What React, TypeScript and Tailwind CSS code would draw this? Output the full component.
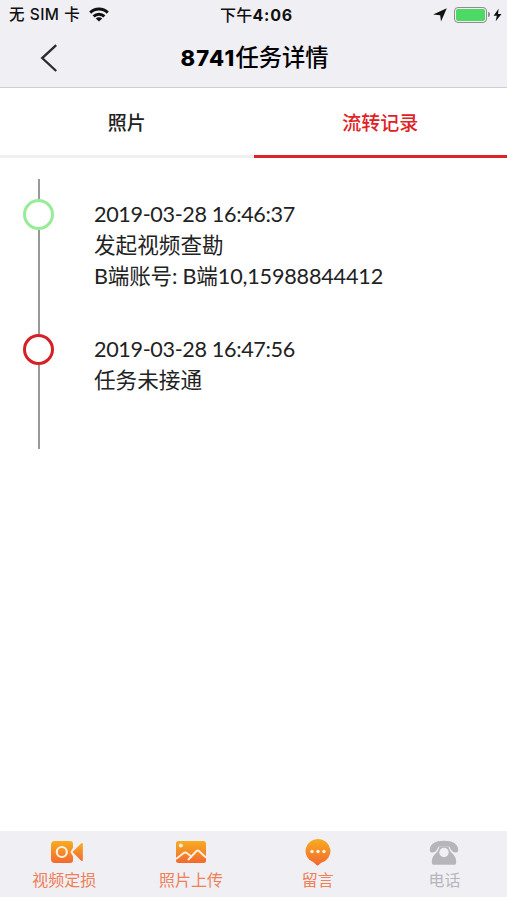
import type { ReactNode } from 'react'
import { clsx } from 'clsx'

type RecordItem = { time: string; lines: string[]; status: 'ok' | 'fail' }

const RECORDS: RecordItem[] = [
  {
    time: '2019-03-28 16:46:37',
    lines: ['发起视频查勘', 'B端账号: B端10,15988844412'],
    status: 'ok',
  },
  { time: '2019-03-28 16:47:56', lines: ['任务未接通'], status: 'fail' },
]

function WifiIcon() {
  return (
    <svg width="20" height="15" viewBox="0 0 20 15" fill="none" stroke="#111" strokeWidth="2.9">
      <path d="M1.2 5.6a12.6 12.6 0 0 1 17.6 0" />
      <path d="M4.6 9.4a7.8 7.8 0 0 1 10.8 0" />
      <path d="M10 14.6 6.800 11.500a4.500 4.500 0 0 1 6.400 0Z" fill="#111" stroke="none" />
    </svg>
  )
}

function StatusBar() {
  return (
    <div className="grid h-[29px] grid-cols-3 items-center text-[16px] text-[#111]">
      <div className="flex items-center pl-[9px] font-medium">
        <span className="whitespace-pre text-[15.5px] tracking-[0.5px]">无 SIM 卡</span>
        <span className="ml-[9px]">
          <WifiIcon />
        </span>
      </div>
      <div className="pl-[6px] text-center font-medium whitespace-nowrap tracking-[0.2px]">
        下午<span className="font-bold tracking-[0.8px]">4:06</span>
      </div>
      <div className="flex items-center justify-end pr-[5px]">
        <svg width="14" height="14" viewBox="0 0 14 14" fill="#111">
          <path d="M13.8.2 8 13.6 7.2 7.2.1 6.4Z" />
        </svg>
        <div className="ml-[7px] h-4 w-[33px] rounded-[4px] border border-[#8d8d92] p-px">
          <div className="h-full rounded-[2px] bg-[#4cd964]" />
        </div>
        <div className="ml-px h-[5px] w-[2px] rounded-r bg-[#8d8d92]" />
        <svg className="ml-[3px]" width="9" height="14" viewBox="0 0 9 14" fill="#111">
          <path d="M5.6.8.6 7.7h3.2L2.7 13.2 8.5 6H5Z" />
        </svg>
      </div>
    </div>
  )
}

function NavBar() {
  return (
    <div className="grid h-[59px] grid-cols-[90px_1fr_90px] items-center border-b border-[#cfcfd3]">
      <button className="pl-[40px]" aria-label="返回">
        <svg width="18" height="28" viewBox="0 0 18 28" fill="none" stroke="#2b2b2d" strokeWidth="2.3">
          <path d="M16.2 1.2 2.2 14.1l14 12.9" />
        </svg>
      </button>
      <h1 className="pl-[2px] text-center text-[23.3px] leading-none font-medium whitespace-nowrap text-black">
        <span className="text-[22px] font-extrabold tracking-[1.2px]">8741</span>任务详情
      </h1>
    </div>
  )
}

function Tab({ label, active }: { label: string; active?: boolean }) {
  return (
    <button
      className={clsx(
        'flex-1 border-b-[3px] pt-[5px] text-[19px] font-medium',
        active ? 'border-[#de2226] text-[#de2226]' : 'border-[#f0f0f2] text-[#222]',
      )}
    >
      {label}
    </button>
  )
}

function TimelineRow({ record }: { record: RecordItem }) {
  return (
    <li className="flex h-[135px]">
      <div className="flex w-[31px] flex-col items-center">
        <div className="h-5 w-[2px] bg-[#999]" />
        <div
          className={clsx(
            'size-[31px] rounded-full border-3',
            record.status === 'ok' ? 'border-[#98eb98]' : 'border-[#d42027]',
          )}
        />
        <div className="w-[2px] flex-1 bg-[#999]" />
      </div>
      <div className="ml-[40px] pt-5 font-[Lato,'Noto_Sans_CJK_SC',sans-serif] text-[21.6px] leading-[31px] whitespace-nowrap text-[#222]">
        <p className="tracking-[-0.36px]">{record.time}</p>
        {record.lines.map((line) => (
          <p key={line} className={clsx(line.includes(':') && 'tracking-[-0.18px]')}>
            {line}
          </p>
        ))}
      </div>
    </li>
  )
}

function VideoIcon() {
  return (
    <svg width="34" height="28" viewBox="0 0 34 28" className="ml-[7px]">
      <path d="M5 3h15q3 0 3 3v3.5L20.5 14l2.5 4.5V22q0 3-3 3H5q-4 0-4-4V7q0-4 4-4Z" fill="url(#orange)" />
      <path d="M22.5 14 31 5.5q1.8-1.5 1.8.8v15.4q0 2.3-1.8.8Z" fill="url(#orange)" />
      <circle cx="11.8" cy="14" r="5" fill="none" stroke="#fdf0dc" strokeWidth="2.2" />
    </svg>
  )
}

function PhotoIcon() {
  return (
    <svg width="32" height="28" viewBox="0 0 32 28" className="ml-[2px]">
      <rect x="1" y="3" width="30" height="22" rx="2.5" fill="url(#orange)" />
      <circle cx="5.8" cy="7.6" r="2" fill="#fdf0dc" />
      <path
        d="m1 21 8-6.2q1.2-.8 2.4 0l5 3.7M13 22l8.5-9q1.2-1 2.4 0l7.1 6.500"
        fill="none"
        stroke="#fdf0dc"
        strokeWidth="2"
      />
    </svg>
  )
}

function MessageIcon() {
  return (
    <svg width="28" height="28" viewBox="0 0 28 28" className="ml-[2px]">
      <path
        d="M14 .9a12.400 12.100 0 0 1 3.200 23.800L14.300 27.200q-.9.700-1.600 0L9.500 24.300A12.400 12.100 0 0 1 14 .9Z"
        fill="url(#orange)"
      />
      <circle cx="8" cy="13.500" r="1.700" fill="#fff5e6" />
      <circle cx="14" cy="13.500" r="1.700" fill="#fff5e6" />
      <circle cx="20" cy="13.500" r="1.700" fill="#fff5e6" />
    </svg>
  )
}

function PhoneIcon() {
  return (
    <svg width="30" height="28" viewBox="0 0 30 28">
      <path
        d="M.8 12C.8 6 6.5 2.8 15 2.8S29.2 6 29.2 12c0 1.8-.8 2.5-2.4 2.5-2 0-3.300-.8-4.600-2.500-1-1.300-1.200-2.200-1.700-3.200H9.500c-.5 1-.7 1.900-1.700 3.200-1.300 1.700-2.600 2.500-4.600 2.500C1.600 14.500.8 13.800.8 12Z"
        fill="#b6b6ba"
      />
      <path
        d="M10.500 9h9c.8 3 2.300 5 4.800 7.500 2.200 2.300 2.900 4.500 2.900 7.500 0 2-.8 2.800-2.500 2.800H5.300c-1.700 0-2.500-.8-2.500-2.800 0-3 .7-5.200 2.900-7.500C8.200 14 9.700 12 10.500 9Z"
        fill="#b6b6ba"
      />
      <circle cx="15" cy="14.500" r="4.700" fill="#efeff4" />
    </svg>
  )
}

function ToolItem({ icon, label, disabled }: { icon: ReactNode; label: string; disabled?: boolean }) {
  return (
    <button
      disabled={disabled}
      className={clsx(
        'flex flex-1 flex-col items-center pt-[7px] text-[16px] leading-[28px]',
        disabled ? 'text-[#b6b6ba]' : 'text-[#f08058]',
      )}
    >
      {icon}
      <span className="pl-[2px]">{label}</span>
    </button>
  )
}

export default function App() {
  return (
    <div className="flex h-[900px] w-[507px] flex-col overflow-hidden bg-white font-[Inter,'Noto_Sans_CJK_SC',sans-serif]">
      {/* shared gradient of the toolbar icons */}
      <svg width="0" height="0" className="absolute">
        <defs>
          <linearGradient id="orange" x1="0" y1="0" x2="0" y2="1">
            <stop offset="0" stopColor="#f7ad21" />
            <stop offset="1" stopColor="#f2682f" />
          </linearGradient>
        </defs>
      </svg>

      <header className="bg-[#efeff4]">
        <StatusBar />
        <NavBar />
      </header>

      <nav className="flex h-[70px]">
        <Tab label="照片" />
        <Tab label="流转记录" active />
      </nav>

      <ul className="flex-1 pt-[21px] pl-[23px]">
        {RECORDS.map((r) => (
          <TimelineRow key={r.time} record={r} />
        ))}
      </ul>

      <footer className="mb-[3px] flex h-[66px] bg-[#efeff4]">
        <ToolItem icon={<VideoIcon />} label="视频定损" />
        <ToolItem icon={<PhotoIcon />} label="照片上传" />
        <ToolItem icon={<MessageIcon />} label="留言" />
        <ToolItem icon={<PhoneIcon />} label="电话" disabled />
      </footer>
    </div>
  )
}
